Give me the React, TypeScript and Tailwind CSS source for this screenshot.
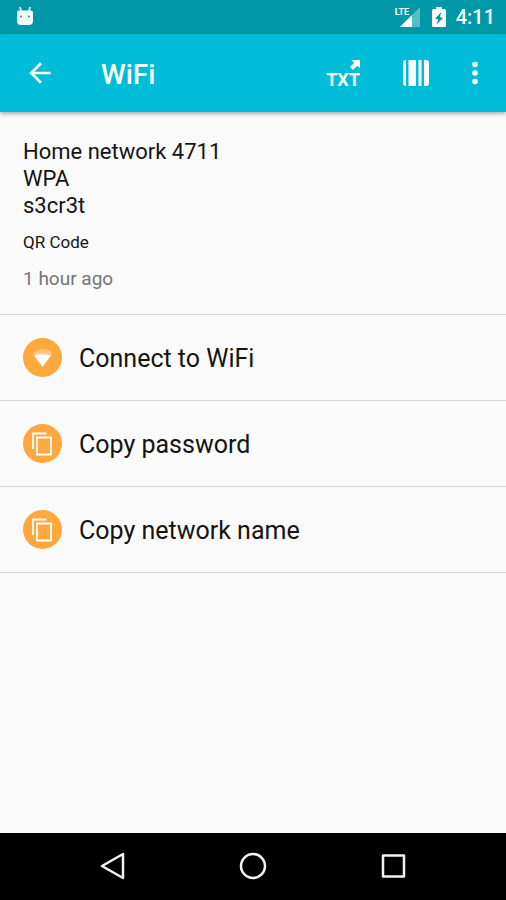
import type { ReactNode } from "react";

const actions = [
    { label: "Connect to WiFi", icon: <WifiIcon /> },
    { label: "Copy password", icon: <CopyIcon /> },
    { label: "Copy network name", icon: <CopyIcon /> },
];

export default function App() {
    return (
        <div className="flex min-h-screen flex-col bg-[#fafafa] font-[Roboto,sans-serif] text-[#141414]">
            <StatusBar />
            <AppBar />

            <main className="flex-1">
                {/* Scanned code details */}
                <section className="border-b border-[#d8d8d8] px-[23px] pt-[26px] pb-[23px]">
                    <p className="text-[22px] leading-[27px]">
                        Home network 4711
                        <br />
                        WPA
                        <br />
                        s3cr3t
                    </p>
                    <p className="mt-[11px] text-[17px] leading-6">QR Code</p>
                    <p className="mt-[13px] text-[19px] leading-6 text-[#757575]">1 hour ago</p>
                </section>

                <ul>
                    {actions.map((action) => (
                        <li key={action.label} className="border-b border-[#d8d8d8]">
                            <button className="flex h-[85px] w-full items-center gap-[17px] px-[23px] text-left">
                                <span className="flex size-[39px] shrink-0 items-center justify-center rounded-full bg-[#ffa83e] text-white">
                                    {action.icon}
                                </span>
                                <span className="pt-0.5 text-[25px] leading-8">{action.label}</span>
                            </button>
                        </li>
                    ))}
                </ul>
            </main>

            <NavBar />
        </div>
    );
}

function StatusBar() {
    return (
        <div className="flex h-[34px] items-center justify-between bg-[#0097a7] pr-[11px] pl-4 text-white">
            <svg className="h-5 w-[18px]" viewBox="0 0 18 20" fill="none">
                <path d="M4 0.500l1.300 4M14 0.500l-1.300 4" stroke="#d5f1f4" strokeWidth="1.800" strokeLinecap="round" />
                <path d="M1 5.500q0-2 2-2h12q2 0 2 2V14q0 4-4 4H5q-4 0-4-4z" fill="#f0fcfd" />
                <circle cx="5" cy="9.500" r="1" fill="#26808c" />
                <circle cx="13" cy="9.500" r="1" fill="#26808c" />
            </svg>
            <div className="flex items-center">
                <div className="relative h-5 w-[25px]">
                    <svg className="size-full" viewBox="0 0 25 20">
                        <path d="M25 0v20H5z" fill="#fff" fillOpacity="0.35" />
                        <path d="M17 8v12H5z" fill="#fff" />
                        <path d="M0 0h16v9H0z" fill="#0097a7" />
                    </svg>
                    <span className="absolute top-0 left-0 text-[9px] leading-[11px] font-bold">LTE</span>
                </div>
                <svg className="ml-3 h-5 w-[14px]" viewBox="0 0 14 20">
                    <path
                        fill="#fff"
                        fillRule="evenodd"
                        d="M4 0h6v2h2.500q1.500 0 1.500 1.500v15q0 1.500-1.500 1.500h-11Q0 20 0 18.500v-15Q0 2 1.500 2H4zM9.500 5L3 11.500l3.200 1L4.500 17.500 11 11 7.800 10z"
                    />
                </svg>
                <span className="ml-[10px] text-[20px] leading-6 font-medium">4:11</span>
            </div>
        </div>
    );
}

function AppBar() {
    return (
        <header className="flex h-[78px] items-center bg-[#00bcd9] pr-[11px] pl-5 text-white shadow-[0_2px_4px_rgba(0,0,0,0.3)]">
            <button aria-label="Back" className="flex size-10 items-center justify-center">
                <svg className="size-8" viewBox="0 0 24 24" fill="currentColor">
                    <path d="M20 11H7.830l5.590-5.590L12 4l-8 8 8 8 1.410-1.410L7.830 13H20z" />
                </svg>
            </button>
            <h1 className="ml-[41px] flex-1 pt-1 text-[28px] leading-9 font-medium">WiFi</h1>

            <button aria-label="Share as text" className="flex w-10 flex-col items-center pt-1">
                <span className="flex flex-col items-end">
                    <svg className="size-[10px]" viewBox="0 0 10 10" fill="currentColor">
                        <path d="M1.500 0H10v8.500L7.300 5.800 3 10 0 7l4.200-4.300z" />
                    </svg>
                    <span className="text-[18px] leading-5 font-bold">TXT</span>
                </span>
            </button>
            <button aria-label="Show barcode" className="ml-[33px] flex size-10 items-center justify-center">
                <svg className="size-[26px]" viewBox="0 0 26 26" fill="currentColor">
                    <path d="M3 0v26Q0 26 0 23V3Q0 0 3 0z" />
                    <path d="M5.500 0h7.500v26H5.500zM15.500 0h3v26h-3z" />
                    <path d="M21 0h2q3 0 3 3v20q0 3-3 3h-2z" />
                </svg>
            </button>
            <button aria-label="More options" className="ml-[19px] flex size-10 items-center justify-center">
                <svg className="h-6 w-2" viewBox="0 0 8 24" fill="currentColor">
                    <circle cx="4" cy="3.500" r="2.800" />
                    <circle cx="4" cy="12" r="2.800" />
                    <circle cx="4" cy="20.500" r="2.800" />
                </svg>
            </button>
        </header>
    );
}

function WifiIcon() {
    return (
        <svg className="size-6" viewBox="0 0 24 24">
            <path d="M1.500 7q10-7.500 20 0l-2.500 3.300H4z" fill="#fff" fillOpacity="0.35" />
            <path d="M3 9.500q8.500-3 17 0L11.500 21z" fill="#fff" />
        </svg>
    );
}

function CopyIcon() {
    return (
        <svg className="size-6" viewBox="0 0 24 24" fill="none" stroke="currentColor" strokeWidth="1.800">
            <path d="M15.500 1.500H2V17" />
            <path d="M6 5.500h14v17H6z" />
        </svg>
    );
}

function NavButton({ label, children }: { label: string; children: ReactNode }) {
    return (
        <button aria-label={label} className="flex h-full w-[140px] items-center justify-center">
            <svg className="size-7" viewBox="0 0 28 28" fill="none" stroke="#f2f2f2" strokeWidth="2.500" strokeLinejoin="round">
                {children}
            </svg>
        </button>
    );
}

function NavBar() {
    return (
        <nav className="flex h-[67px] items-center justify-center bg-black pb-0.5">
            <NavButton label="Back">
                <path d="M24 2v24L3 14z" />
            </NavButton>
            <NavButton label="Home">
                <circle cx="14" cy="14" r="12" />
            </NavButton>
            <NavButton label="Recent apps">
                <path d="M4 3.500h21v21H4z" />
            </NavButton>
        </nav>
    );
}
